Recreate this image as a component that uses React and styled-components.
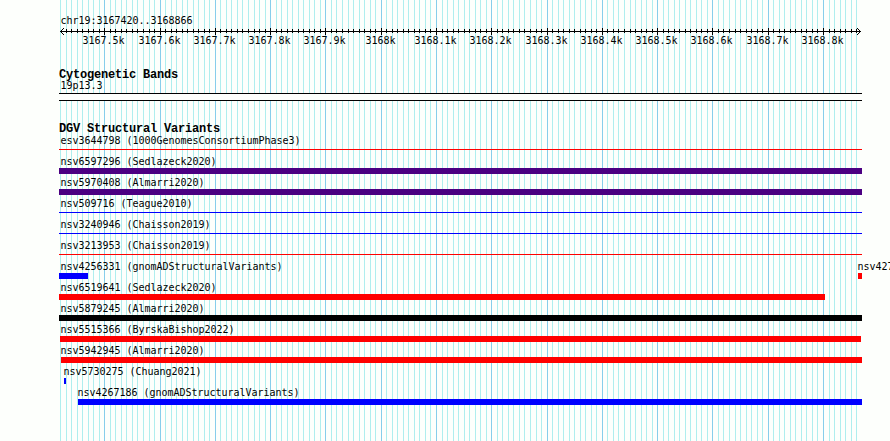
import React from "react";
import styled, { createGlobalStyle } from "styled-components";

const START = 3167420;
const END = 3168866;
const SCALE = 800 / 1447;

const toX = (pos) => Math.round((pos - START) * SCALE + 0.05);

const ticks = [];
for (let pos = START; pos <= END; pos += 10) {
  ticks.push({ pos, x: toX(pos), major: pos % 100 === 0 });
}

const black = "#000000";
const red = "#ff0000";
const blue = "#0000ff";
const indigo = "#4b0082";

const rows = [
  [{ name: "esv3644798 (1000GenomesConsortiumPhase3)", color: red, thin: true }],
  [{ name: "nsv6597296 (Sedlazeck2020)", color: indigo }],
  [{ name: "nsv5970408 (Almarri2020)", color: indigo }],
  [{ name: "nsv509716 (Teague2010)", color: blue, thin: true }],
  [{ name: "nsv3240946 (Chaisson2019)", color: blue, thin: true }],
  [{ name: "nsv3213953 (Chaisson2019)", color: red, thin: true }],
  [
    { name: "nsv4256331 (gnomADStructuralVariants)", color: blue, width: 29 },
    { name: "nsv427", color: red, gap: 799, width: 4, indent: -1 },
  ],
  [{ name: "nsv6519641 (Sedlazeck2020)", color: red, width: 766 }],
  [{ name: "nsv5879245 (Almarri2020)", color: black }],
  [{ name: "nsv5515366 (ByrskaBishop2022)", color: red, gap: 1, width: 801, indent: 0 }],
  [{ name: "nsv5942945 (Almarri2020)", color: red, gap: 2, width: 801, indent: -1 }],
  [{ name: "nsv5730275 (Chuang2021)", color: blue, gap: 5, width: 2, indent: -1 }],
  [{ name: "nsv4267186 (gnomADStructuralVariants)", color: blue, gap: 19, width: 784, indent: -1 }],
];

const Grid = () => {
  return (
    <GridLayer width="803" height="441" shapeRendering="crispEdges">
      {ticks.map((t) => (
        <rect
          key={t.pos}
          x={t.x + 1}
          y="0"
          width="1"
          height="441"
          fill={t.major ? "#87ceeb" : "#afeeee"}
        />
      ))}
    </GridLayer>
  );
};

const Ruler = () => {
  return (
    <RulerSvg width="803" height="30" shapeRendering="crispEdges">
      <rect x="1" y="3" width="801" height="1" />
      {ticks.slice(1).map((t) => (
        <rect
          key={t.pos}
          x={t.x + 1}
          y={t.major ? 0 : 1}
          width="1"
          height={t.major ? 7 : 4}
        />
      ))}
      {[1, 2, 3].map((n) => (
        <g key={n}>
          <rect x={1 + n} y={3 - n} width="1" height="1" />
          <rect x={1 + n} y={3 + n} width="1" height="1" />
          <rect x={801 - n} y={3 - n} width="1" height="1" />
          <rect x={801 - n} y={3 + n} width="1" height="1" />
        </g>
      ))}
      {ticks
        .filter((t) => t.major)
        .map((t) => {
          const text = `${t.pos / 1000}k`;
          return (
            <TickLabel key={t.pos} x={t.x - (text.length === 5 ? 14.6 : 20.6)} y="16">
              {text}
            </TickLabel>
          );
        })}
    </RulerSvg>
  );
};

const Feature = ({ name, color, thin, gap = 0, width = 803, indent = 1 }) => {
  return (
    <FeatureBox $gap={gap}>
      <Label $indent={indent}>{name}</Label>
      <Bar $color={color} $thin={thin} $width={width} />
    </FeatureBox>
  );
};

export default function App() {
  return (
    <Page>
      <GlobalStyle />
      <Panel>
        <Grid />
        <Region>chr19:3167420..3168866</Region>
        <Ruler />
        <Title>Cytogenetic Bands</Title>
        <BandLabel $indent={1}>19p13.3</BandLabel>
        <Band />
        <VariantTitle>DGV Structural Variants</VariantTitle>
        {rows.map((row) => (
          <Row key={row[0].name}>
            {row.map((item) => (
              <Feature key={item.name} {...item} />
            ))}
          </Row>
        ))}
      </Panel>
    </Page>
  );
}

const GlobalStyle = createGlobalStyle`
  body {
    margin: 0;
    background: #fdfffc;
    overflow: hidden;
  }
`;

const Page = styled.div`
  width: 890px;
  height: 441px;
  overflow: hidden;
  padding-left: 59px;
  box-sizing: border-box;
  color: #000;
  font-family: "DejaVu Sans Mono", monospace;
  font-size: 10px;
  letter-spacing: -0.02px;
`;

const Panel = styled.div`
  position: relative;
  width: 803px;
  height: 441px;
  padding-top: 16px;
  box-sizing: border-box;
`;

const GridLayer = styled.svg`
  position: absolute;
  top: 0;
  left: 0;
  z-index: -1;
`;

const Region = styled.div`
  height: 12px;
  line-height: 10px;
  padding-left: 1.4px;
  white-space: pre;
`;

const RulerSvg = styled.svg`
  display: block;
  overflow: visible;
`;

const TickLabel = styled.text`
  font-size: 10px;
  letter-spacing: -0.02px;
`;

const Title = styled.div`
  height: 13px;
  margin-top: 10px;
  line-height: 15px;
  font-family: "Liberation Mono", monospace;
  font-size: 12px;
  font-weight: bold;
  letter-spacing: -0.2px;
  white-space: pre;
`;

const VariantTitle = styled(Title)`
  margin-top: 21px;
`;

const Label = styled.div`
  height: 10px;
  line-height: 8px;
  margin-left: ${(props) => props.$indent + 0.4}px;
  white-space: pre;
`;

const BandLabel = styled(Label)`
  line-height: 10px;
`;

const Band = styled.div`
  height: 6px;
  margin-top: 2px;
  border-top: 1px solid #000;
  border-bottom: 1px solid #000;
  background: #fdfffc;
`;

const Row = styled.div`
  display: grid;
  height: 21px;
`;

const FeatureBox = styled.div`
  grid-area: 1 / 1;
  width: 0;
  margin-left: ${(props) => props.$gap}px;
  padding-top: 2px;
`;

const Bar = styled.div`
  width: ${(props) => props.$width}px;
  height: ${(props) => (props.$thin ? 1 : 6)}px;
  margin-top: ${(props) => (props.$thin ? 2 : 0)}px;
  background: ${(props) => props.$color};
`;
